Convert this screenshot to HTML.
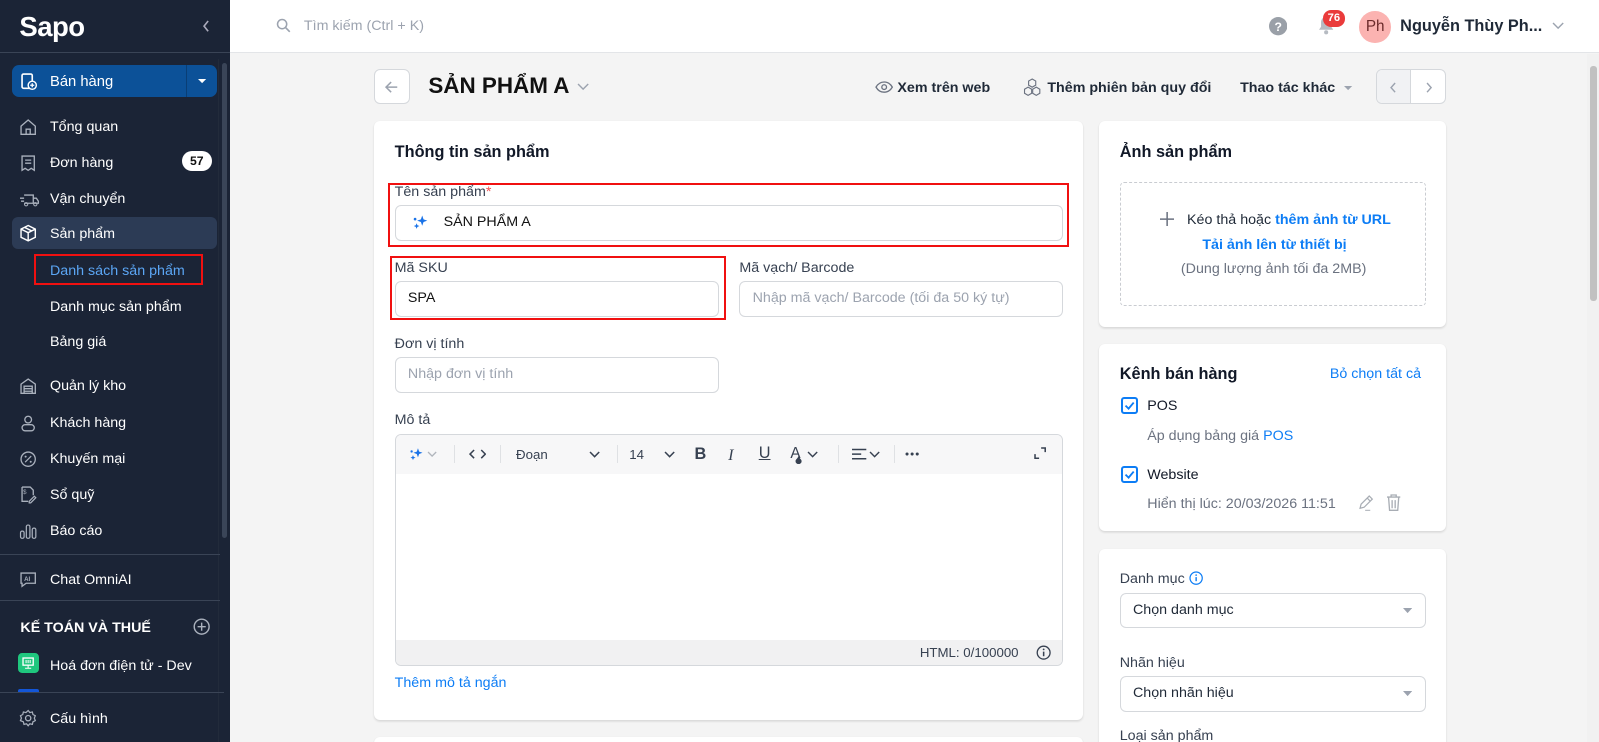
<!DOCTYPE html>
<html><head><meta charset="utf-8">
<style>
*{box-sizing:border-box;margin:0;padding:0}
html,body{width:1599px;height:742px;overflow:hidden;background:#f4f4f4}
body{font-family:"Liberation Sans","Noto Sans CJK SC",sans-serif;color:#111827}
#root{zoom:1.0198;position:relative;width:1568px;height:728px;overflow:hidden;background:#f4f4f4}
.abs{position:absolute}
.sb{position:absolute;left:0;top:0;width:226px;height:728px;background:#1b2436;color:#fff}
.mi{position:absolute;left:49px;font-size:14px;color:#fff;white-space:nowrap;line-height:16px;margin-top:2px}
.ic{position:absolute;left:19px;width:18px;height:18px;margin-top:2px}
.sep{position:absolute;left:0;width:216px;height:1px;background:#3a4456}
.top{position:absolute;left:226px;top:0;width:1342px;height:52px;background:#fff;border-bottom:1px solid #e3e5e8}
.card{position:absolute;background:#fff;border-radius:6px;box-shadow:0 1px 2px rgba(0,0,0,.12)}
.lbl{position:absolute;font-size:14px;color:#374151;line-height:16px;white-space:nowrap}
.inp{position:absolute;border:1px solid #d5d8dc;border-radius:6px;background:#fff;font-size:14px;line-height:33px;padding-left:12px;white-space:nowrap}
.ph{color:#9ca3af}
.blue{color:#0d7df5}
.t14{font-size:14px;line-height:16px;white-space:nowrap}
svg{display:block}
</style></head><body><div id="root">

<!-- SIDEBAR -->
<div class="sb">
  <div class="abs" style="left:19px;top:11px;font-size:27px;font-weight:bold;letter-spacing:-0.5px;color:#fff;font-family:'Liberation Sans',sans-serif">Sapo</div>
  <svg class="abs" style="left:197px;top:19px" width="10" height="14" viewBox="0 0 10 14"><path d="M7 2L3 7l4 5" stroke="#aab" stroke-width="1.6" fill="none"/></svg>
  <div class="abs" style="left:0;top:51px;width:226px;height:1px;background:#3a4456"></div>
  <div class="abs" style="left:214px;top:58px;width:1px;height:670px;background:#222b3b"></div>
  <div class="abs" style="left:218px;top:62px;width:5px;height:466px;background:#3a4558;border-radius:3px"></div>

  <div class="abs" style="left:12px;top:64px;width:201px;height:31px;background:#0c5198;border-radius:7px"></div>
  <div class="abs" style="left:182px;top:64px;width:1px;height:31px;background:#0a3e75"></div>
  <svg class="abs" style="left:193px;top:76px" width="10" height="6"><path d="M1 1h8L5 5z" fill="#fff"/></svg>
  <svg class="ic" style="top:69px" viewBox="0 0 18 18"><rect x="3" y="2" width="10" height="14" rx="1.5" fill="none" stroke="#fff" stroke-width="1.6"/><circle cx="13" cy="13" r="4" fill="#0c5198" stroke="#fff" stroke-width="1.4"/><path d="M13 11v4M11 13h4" stroke="#fff" stroke-width="1.3"/></svg>
  <div class="mi" style="top:71px;font-size:14.5px">Bán hàng</div>

  <svg class="ic" style="top:114px" viewBox="0 0 18 18"><path d="M2 8l7-6 7 6v8H2z M7 16v-5h4v5" fill="none" stroke="#aab1bd" stroke-width="1.3"/></svg>
  <div class="mi" style="top:115px">Tổng quan</div>
  <svg class="ic" style="top:149px" viewBox="0 0 18 18"><path d="M3 2h12v14l-3-2-3 2-3-2-3 2z M6 6h6M6 9h6" fill="none" stroke="#aab1bd" stroke-width="1.3"/></svg>
  <div class="mi" style="top:150px">Đơn hàng</div>
  <div class="abs" style="left:178px;top:148px;width:30px;height:20px;border-radius:10px;background:#fff;color:#111;font-size:12px;font-weight:bold;text-align:center;line-height:20px">57</div>
  <svg class="ic" style="top:184px;width:20px" viewBox="0 0 20 18"><path d="M5 5h9v8H5 M14 8h3l2 3v2h-5 M1 8h4M2 11h3" fill="none" stroke="#aab1bd" stroke-width="1.3"/><circle cx="7" cy="14" r="1.6" fill="none" stroke="#aab1bd"/><circle cx="16" cy="14" r="1.6" fill="none" stroke="#aab1bd"/></svg>
  <div class="mi" style="top:185px">Vận chuyển</div>
  <div class="abs" style="left:12px;top:213px;width:201px;height:31px;background:#2c3b55;border-radius:6px"></div>
  <svg class="ic" style="top:218px" viewBox="0 0 18 18"><path d="M9 1.5l7 3.5v8l-7 3.5-7-3.5v-8z M2 5l7 3.5 7-3.5 M9 8.5v8 M5.5 3.3l7 3.5" fill="none" stroke="#fff" stroke-width="1.4"/></svg>
  <div class="mi" style="top:220px">Sản phẩm</div>
  <div class="abs" style="left:33px;top:249px;width:166px;height:30px;border:2.5px solid #f01010"></div>
  <div class="mi" style="top:256px;color:#5ba6f5">Danh sách sản phẩm</div>
  <div class="mi" style="top:291px">Danh mục sản phẩm</div>
  <div class="mi" style="top:326px">Bảng giá</div>

  <svg class="ic" style="top:368px" viewBox="0 0 18 18"><path d="M2 7l7-5 7 5v9H2z M5 9h8v7H5z M5 11.5h8M5 14h8" fill="none" stroke="#aab1bd" stroke-width="1.3"/></svg>
  <div class="mi" style="top:369px">Quản lý kho</div>
  <svg class="ic" style="top:404px" viewBox="0 0 18 18"><circle cx="9" cy="5.5" r="3.3" fill="none" stroke="#aab1bd" stroke-width="1.3"/><rect x="3" y="10.5" width="12" height="6" rx="3" fill="none" stroke="#aab1bd" stroke-width="1.3"/></svg>
  <div class="mi" style="top:405px">Khách hàng</div>
  <svg class="ic" style="top:439px" viewBox="0 0 18 18"><circle cx="9" cy="9" r="7" fill="none" stroke="#aab1bd" stroke-width="1.3"/><path d="M6 12l6-6" stroke="#aab1bd" stroke-width="1.2"/><circle cx="6.5" cy="6.5" r="1" fill="#aab1bd"/><circle cx="11.5" cy="11.5" r="1" fill="#aab1bd"/></svg>
  <div class="mi" style="top:440px">Khuyến mại</div>
  <svg class="ic" style="top:474px" viewBox="0 0 18 18"><path d="M3 2h8l3 3v5 M3 2v14h6" fill="none" stroke="#aab1bd" stroke-width="1.3"/><path d="M10 16l5-5 1.5 1.5-5 5H10z" fill="none" stroke="#aab1bd" stroke-width="1.2"/><text x="4" y="9" font-size="6" fill="#aab1bd">$</text></svg>
  <div class="mi" style="top:476px">Sổ quỹ</div>
  <svg class="ic" style="top:510px" viewBox="0 0 18 18"><rect x="1.5" y="9" width="3.5" height="7" rx="1.5" fill="none" stroke="#aab1bd" stroke-width="1.2"/><rect x="7.2" y="3" width="3.5" height="13" rx="1.5" fill="none" stroke="#aab1bd" stroke-width="1.2"/><rect x="13" y="6" width="3.5" height="10" rx="1.5" fill="none" stroke="#aab1bd" stroke-width="1.2"/></svg>
  <div class="mi" style="top:511px">Báo cáo</div>
  <div class="sep" style="top:543px"></div>
  <svg class="ic" style="top:557px" viewBox="0 0 18 18"><path d="M2 3h14v10H7l-4 3v-3H2z" fill="none" stroke="#aab1bd" stroke-width="1.3"/><text x="5" y="11" font-size="6" font-weight="bold" fill="#aab1bd">AI</text></svg>
  <div class="mi" style="top:559px">Chat OmniAI</div>
  <div class="sep" style="top:588px"></div>
  <div class="abs" style="left:20px;top:608px;font-size:14px;font-weight:bold;color:#fff;white-space:nowrap">KẾ TOÁN VÀ THUẾ</div>
  <svg class="abs" style="left:189px;top:606px" width="17" height="17" viewBox="0 0 17 17"><circle cx="8.5" cy="8.5" r="7.3" fill="none" stroke="#aab1bd" stroke-width="1.4"/><path d="M8.5 4.5v8M4.5 8.5h8" stroke="#aab1bd" stroke-width="1.4"/></svg>
  <div class="abs" style="left:18px;top:640px;width:20px;height:20px;background:#1fc77e;border-radius:4px"></div>
  <svg class="abs" style="left:22px;top:644px" width="12" height="12" viewBox="0 0 12 12"><rect x="1" y="1" width="10" height="7" fill="none" stroke="#fff" stroke-width="1.3"/><path d="M6 8v3M3 11h6M4 3v3M6 3v3M8 3v3" stroke="#fff"/></svg>
  <div class="mi" style="top:643px">Hoá đơn điện tử - Dev</div>
  <div class="abs" style="left:18px;top:676px;width:20px;height:3px;background:#1356d8;border-radius:2px 2px 0 0"></div>
  <div class="sep" style="top:679px;width:220px"></div>
  <svg class="ic" style="top:693px" viewBox="0 0 18 18"><circle cx="9" cy="9" r="2.6" fill="none" stroke="#aab1bd" stroke-width="1.3"/><path d="M9 1.5l1.6 2 2.5-.6.6 2.5 2.3 1.2-1 2.4 1 2.4-2.3 1.2-.6 2.5-2.5-.6-1.6 2-1.6-2-2.5.6-.6-2.5L1.4 11.4l1-2.4-1-2.4 2.3-1.2.6-2.5 2.5.6z" fill="none" stroke="#aab1bd" stroke-width="1.2"/></svg>
  <div class="mi" style="top:695px">Cấu hình</div>
</div>

<!-- TOPBAR -->
<div class="top">
  <svg class="abs" style="left:45px;top:18px" width="15" height="15" viewBox="0 0 15 15"><circle cx="6" cy="6" r="4.5" fill="none" stroke="#9ca3af" stroke-width="1.5"/><path d="M9.5 9.5l4 4" stroke="#9ca3af" stroke-width="1.6"/></svg>
  <div class="abs t14" style="left:72px;top:18px;color:#9ca3af">Tìm kiếm (Ctrl + K)</div>
  <svg class="abs" style="left:1018px;top:17px" width="18" height="18" viewBox="0 0 18 18"><circle cx="9" cy="9" r="9" fill="#9aa0a8"/><text x="9" y="13.5" text-anchor="middle" font-size="12" font-weight="bold" fill="#fff" font-family="Liberation Sans">?</text></svg>
  <svg class="abs" style="left:1066px;top:16px" width="16" height="19" viewBox="0 0 16 19"><path d="M8 1c3.5 0 5 2.5 5 5.5v4l2 3H1l2-3v-4C3 3.5 4.5 1 8 1z" fill="#b6bbc2"/><circle cx="8" cy="16" r="2" fill="#b6bbc2"/></svg>
  <div class="abs" style="left:1071px;top:10px;width:22px;height:16px;background:#ea3b3b;border-radius:8px;color:#fff;font-size:11px;font-weight:bold;text-align:center;line-height:16px">76</div>
  <div class="abs" style="left:1107px;top:11px;width:31px;height:31px;border-radius:50%;background:#fbb3b1;color:#6b2a2a;font-size:15px;text-align:center;line-height:31px">Ph</div>
  <div class="abs" style="left:1147px;top:17px;font-size:16px;font-weight:bold;color:#1f2937;white-space:nowrap">Nguyễn Thùy Ph...</div>
  <svg class="abs" style="left:1296px;top:22px" width="12" height="8"><path d="M1 1l5 5 5-5" stroke="#9ca3af" stroke-width="1.4" fill="none"/></svg>
</div>

<!-- main scrollbar -->
<div class="abs" style="left:1556px;top:53px;width:12px;height:675px;background:#f1f1f1"></div>
<div class="abs" style="left:1559px;top:65px;width:7px;height:230px;background:#c1c1c1;border-radius:3px"></div>

<!-- HEADER -->
<div class="abs" style="left:367px;top:68px;width:35px;height:34px;background:#fff;border:1px solid #d5d8dc;border-radius:6px"></div>
<svg class="abs" style="left:377px;top:78px" width="15" height="14" viewBox="0 0 15 14"><path d="M13 7H2M7 2L2 7l5 5" stroke="#9ca3af" stroke-width="1.5" fill="none"/></svg>
<div class="abs" style="left:420px;top:72px;font-size:22px;font-weight:bold;color:#111;white-space:nowrap">SẢN PHẨM A</div>
<svg class="abs" style="left:566px;top:81px" width="12" height="8"><path d="M1 1l5 5 5-5" stroke="#9ca3af" stroke-width="1.4" fill="none"/></svg>

<svg class="abs" style="left:858px;top:79px" width="18" height="12" viewBox="0 0 18 12"><path d="M1 6c2-3.5 5-5 8-5s6 1.5 8 5c-2 3.5-5 5-8 5s-6-1.5-8-5z" fill="none" stroke="#6b7280" stroke-width="1.3"/><circle cx="9" cy="6" r="2.3" fill="none" stroke="#6b7280" stroke-width="1.3"/></svg>
<div class="abs t14" style="left:880px;top:78px;font-weight:bold;color:#1f2937">Xem trên web</div>
<svg class="abs" style="left:1003px;top:76px" width="18" height="18" viewBox="0 0 18 18"><g fill="none" stroke="#6b7280" stroke-width="1.1"><path d="M9 1l3.5 2v4L9 9 5.5 7V3z"/><path d="M5 9l3.5 2v4L5 17 1.5 15v-4z"/><path d="M13 9l3.5 2v4L13 17l-3.5-2v-4z"/></g></svg>
<div class="abs t14" style="left:1027px;top:78px;font-weight:bold;color:#1f2937">Thêm phiên bản quy đổi</div>
<div class="abs t14" style="left:1216px;top:78px;font-weight:bold;color:#1f2937">Thao tác khác</div>
<svg class="abs" style="left:1317px;top:83px" width="10" height="6"><path d="M1 1h8L5 5z" fill="#9ca3af"/></svg>
<div class="abs" style="left:1349px;top:68px;width:69px;height:34px;border:1px solid #d5d8dc;border-radius:6px;background:#fff;overflow:hidden">
  <div style="position:absolute;left:0;top:0;width:34px;height:34px;background:#f1f2f4;border-right:1px solid #d5d8dc"></div>
</div>
<svg class="abs" style="left:1362px;top:80px" width="8" height="11"><path d="M6 1L2 5.5 6 10" stroke="#9ca3af" stroke-width="1.4" fill="none"/></svg>
<svg class="abs" style="left:1397px;top:80px" width="8" height="11"><path d="M2 1l4 4.5L2 10" stroke="#9ca3af" stroke-width="1.4" fill="none"/></svg>

<!-- CARD 1 -->
<div class="card" style="left:367px;top:119px;width:695px;height:587px"></div>
<div class="abs" style="left:387px;top:140px;font-size:16px;font-weight:bold;color:#111827;white-space:nowrap">Thông tin sản phẩm</div>
<div class="abs" style="left:380px;top:179px;width:668px;height:63px;border:2.5px solid #f01010"></div>
<div class="lbl" style="left:387px;top:180px">Tên sản phẩm<span style="color:#f05050">*</span></div>
<div class="inp" style="left:387px;top:201px;width:655px;height:35px;padding-left:47px;color:#111">SẢN PHẨM A</div>
<svg class="abs" style="left:403px;top:209px" width="18" height="18" viewBox="0 0 18 18"><path d="M11 2.5l1.3 3.7 3.7 1.3-3.7 1.3L11 12.5 9.7 8.8 6 7.5l3.7-1.3z" fill="#1a73e8"/><path d="M5.5 10l.8 2 2 .8-2 .8-.8 2-.8-2-2-.8 2-.8z" fill="#1a73e8"/><circle cx="4" cy="6" r="1.3" fill="#1a73e8"/></svg>

<div class="abs" style="left:382px;top:251px;width:330px;height:63px;border:2.5px solid #f01010"></div>
<div class="lbl" style="left:387px;top:255px">Mã SKU</div>
<div class="inp" style="left:387px;top:276px;width:318px;height:35px;color:#111">SPA</div>
<div class="lbl" style="left:725px;top:255px">Mã vạch/ Barcode</div>
<div class="inp ph" style="left:725px;top:276px;width:317px;height:35px">Nhập mã vạch/ Barcode (tối đa 50 ký tự)</div>
<div class="lbl" style="left:387px;top:329px">Đơn vị tính</div>
<div class="inp ph" style="left:387px;top:350px;width:318px;height:35px">Nhập đơn vị tính</div>
<div class="lbl" style="left:387px;top:404px">Mô tả</div>

<div class="abs" style="left:387px;top:426px;width:655px;height:227px;border:1px solid #d5d8dc;border-radius:6px;overflow:hidden;background:#fff">
  <div style="position:absolute;left:0;top:0;width:100%;height:38px;background:#f7f7f8"></div>
  <div style="position:absolute;left:0;bottom:0;width:100%;height:24px;background:#f1f1f2"></div>
</div>
<!-- toolbar -->
<svg class="abs" style="left:400px;top:437px" width="16" height="16" viewBox="0 0 18 18"><path d="M11 2.5l1.3 3.7 3.7 1.3-3.7 1.3L11 12.5 9.7 8.8 6 7.5l3.7-1.3z" fill="#1a73e8"/><path d="M5.5 10l.8 2 2 .8-2 .8-.8 2-.8-2-2-.8 2-.8z" fill="#1a73e8"/><circle cx="4" cy="6" r="1.3" fill="#1a73e8"/></svg>
<svg class="abs" style="left:419px;top:442px" width="10" height="6"><path d="M1 1l4 4 4-4" stroke="#b0b5bc" stroke-width="1.3" fill="none"/></svg>
<div class="abs" style="left:445px;top:436px;width:1px;height:18px;background:#dfe1e4"></div>
<svg class="abs" style="left:460px;top:440px" width="17" height="10"><path d="M5 1L1 5l4 4M12 1l4 4-4 4" stroke="#374151" stroke-width="1.5" fill="none"/></svg>
<div class="abs" style="left:490px;top:436px;width:1px;height:18px;background:#dfe1e4"></div>
<div class="abs" style="left:506px;top:438px;font-size:13px;color:#374151">Đoạn</div>
<svg class="abs" style="left:578px;top:442px" width="11" height="7"><path d="M1 1l4.5 4.5L10 1" stroke="#374151" stroke-width="1.5" fill="none"/></svg>
<div class="abs" style="left:605px;top:436px;width:1px;height:18px;background:#dfe1e4"></div>
<div class="abs" style="left:617px;top:438px;font-size:13px;color:#374151">14</div>
<svg class="abs" style="left:651px;top:442px" width="11" height="7"><path d="M1 1l4.5 4.5L10 1" stroke="#374151" stroke-width="1.5" fill="none"/></svg>
<div class="abs" style="left:681px;top:436px;font-size:16px;font-weight:bold;color:#374151">B</div>
<div class="abs" style="left:714px;top:436px;font-size:16px;font-style:italic;color:#374151;font-family:'Liberation Serif',serif">I</div>
<div class="abs" style="left:744px;top:435px;font-size:16px;text-decoration:underline;color:#374151">U</div>
<div class="abs" style="left:775px;top:436px;font-size:15px;color:#374151">A</div>
<svg class="abs" style="left:780px;top:446px" width="7" height="9"><path d="M3.5 0C3.5 3 0.5 4 0.5 6a3 3 0 006 0C6.5 4 3.5 3 3.5 0z" fill="#374151"/></svg>
<svg class="abs" style="left:791px;top:442px" width="11" height="7"><path d="M1 1l4.5 4.5L10 1" stroke="#374151" stroke-width="1.4" fill="none"/></svg>
<div class="abs" style="left:822px;top:436px;width:1px;height:18px;background:#dfe1e4"></div>
<svg class="abs" style="left:834px;top:439px" width="16" height="12"><path d="M1 1.5h14M1 6h9M1 10.5h14" stroke="#374151" stroke-width="1.5"/></svg>
<svg class="abs" style="left:852px;top:442px" width="11" height="7"><path d="M1 1l4.5 4.5L10 1" stroke="#374151" stroke-width="1.4" fill="none"/></svg>
<div class="abs" style="left:877px;top:436px;width:1px;height:18px;background:#dfe1e4"></div>
<svg class="abs" style="left:887px;top:443px" width="14" height="4"><circle cx="2" cy="2" r="1.5" fill="#374151"/><circle cx="7" cy="2" r="1.5" fill="#374151"/><circle cx="12" cy="2" r="1.5" fill="#374151"/></svg>
<svg class="abs" style="left:1014px;top:438px" width="12" height="12"><path d="M1 7v4h4M7 1h4v4" stroke="#374151" stroke-width="1.5" fill="none"/></svg>
<div class="abs" style="left:902px;top:632px;font-size:13px;color:#374151;white-space:nowrap">HTML: 0/100000</div>
<svg class="abs" style="left:1016px;top:632px" width="15" height="15" viewBox="0 0 15 15"><circle cx="7.5" cy="7.5" r="6.3" fill="none" stroke="#374151" stroke-width="1.3"/><path d="M7.5 6.5v4.5" stroke="#374151" stroke-width="1.5"/><circle cx="7.5" cy="4.3" r="0.9" fill="#374151"/></svg>
<div class="abs t14 blue" style="left:387px;top:662px">Thêm mô tả ngắn</div>

<div class="card" style="left:367px;top:723px;width:695px;height:40px"></div>

<!-- RIGHT CARD 1 -->
<div class="card" style="left:1078px;top:119px;width:340px;height:202px"></div>
<div class="abs" style="left:1098px;top:140px;font-size:16px;font-weight:bold;white-space:nowrap">Ảnh sản phẩm</div>
<div class="abs" style="left:1098px;top:178px;width:300px;height:122px;border:1px dashed #c9ccd1;border-radius:4px"></div>
<svg class="abs" style="left:1137px;top:208px" width="14" height="14"><path d="M7 0v14M0 7h14" stroke="#6b7280" stroke-width="1.5"/></svg>
<div class="abs t14" style="left:1164px;top:208px;color:#1f2937">Kéo thả hoặc <span class="blue" style="font-weight:bold">thêm ảnh từ URL</span></div>
<div class="abs t14 blue" style="left:1179px;top:232px;font-weight:bold">Tải ảnh lên từ thiết bị</div>
<div class="abs t14" style="left:1158px;top:256px;color:#6b7280">(Dung lượng ảnh tối đa 2MB)</div>

<!-- RIGHT CARD 2 -->
<div class="card" style="left:1078px;top:337px;width:340px;height:184px"></div>
<div class="abs" style="left:1098px;top:358px;font-size:16px;font-weight:bold;white-space:nowrap">Kênh bán hàng</div>
<div class="abs t14 blue" style="left:1304px;top:359px">Bỏ chọn tất cả</div>
<div class="abs" style="left:1099px;top:389px;width:17px;height:17px;border:2px solid #0d7df5;border-radius:3px"></div>
<svg class="abs" style="left:1102px;top:393px" width="11" height="9"><path d="M1.5 4.5l3 3 5-6" stroke="#0d7df5" stroke-width="1.8" fill="none"/></svg>
<div class="abs t14" style="left:1125px;top:390px">POS</div>
<div class="abs t14" style="left:1125px;top:420px;color:#6b7280">Áp dụng bảng giá <span class="blue">POS</span></div>
<div class="abs" style="left:1099px;top:457px;width:17px;height:17px;border:2px solid #0d7df5;border-radius:3px"></div>
<svg class="abs" style="left:1102px;top:461px" width="11" height="9"><path d="M1.5 4.5l3 3 5-6" stroke="#0d7df5" stroke-width="1.8" fill="none"/></svg>
<div class="abs t14" style="left:1125px;top:458px">Website</div>
<div class="abs t14" style="left:1125px;top:486px;color:#6b7280">Hiển thị lúc: 20/03/2026 11:51</div>
<svg class="abs" style="left:1331px;top:484px" width="17" height="17" viewBox="0 0 17 17"><path d="M3 14l1-4 8-8 3 3-8 8z M10 4l3 3" fill="none" stroke="#a8adb4" stroke-width="1.2"/><path d="M8 16h5" stroke="#a8adb4"/></svg>
<svg class="abs" style="left:1359px;top:484px" width="15" height="17" viewBox="0 0 15 17"><path d="M1 3h13M5 3V1h5v2M2.5 3l1 13h8l1-13M6 6v8M9 6v8" fill="none" stroke="#a8adb4" stroke-width="1.3"/></svg>

<!-- RIGHT CARD 3 -->
<div class="card" style="left:1078px;top:538px;width:340px;height:220px"></div>
<div class="lbl" style="left:1098px;top:560px">Danh mục</div>
<svg class="abs" style="left:1166px;top:560px" width="14" height="14" viewBox="0 0 14 14"><circle cx="7" cy="7" r="6" fill="none" stroke="#0d7df5" stroke-width="1.2"/><path d="M7 6v4" stroke="#0d7df5" stroke-width="1.4"/><circle cx="7" cy="4" r="0.8" fill="#0d7df5"/></svg>
<div class="inp" style="left:1098px;top:581px;width:300px;height:35px;color:#1f2937">Chọn danh mục</div>
<svg class="abs" style="left:1376px;top:596px" width="9" height="5"><path d="M0 0h9L4.5 5z" fill="#9ca3af"/></svg>
<div class="lbl" style="left:1098px;top:642px">Nhãn hiệu</div>
<div class="inp" style="left:1098px;top:663px;width:300px;height:35px;color:#1f2937">Chọn nhãn hiệu</div>
<svg class="abs" style="left:1376px;top:678px" width="9" height="5"><path d="M0 0h9L4.5 5z" fill="#9ca3af"/></svg>
<div class="lbl" style="left:1098px;top:714px">Loại sản phẩm</div>

</div></body></html>
